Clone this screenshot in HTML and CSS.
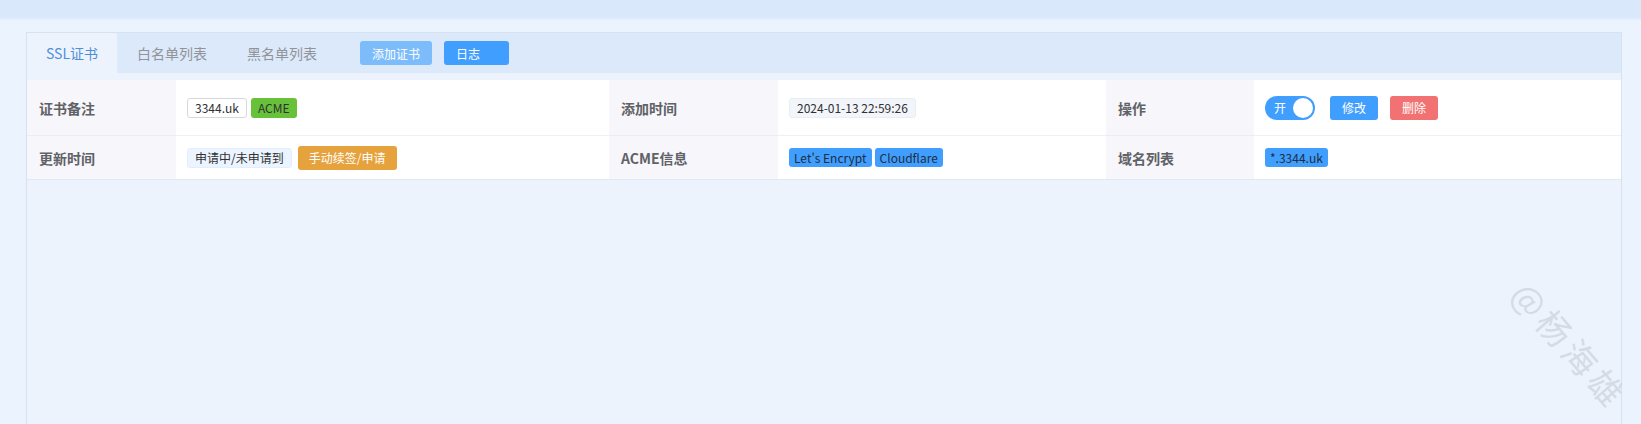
FILE: index.html
```html
<!DOCTYPE html>
<html lang="zh-CN">
<head>
    <meta charset="UTF-8">
    <meta name="viewport" content="width=device-width, initial-scale=1.0">
    <title>SSL证书</title>
    <link rel="stylesheet" href="styles.css">
</head>
<body>

<div class="topbar"></div>

<div class="page">
    <div class="card">
        <!-- タブ -->
        <div class="tabs">
            <div class="tab active">SSL证书</div>
            <div class="tab">白名单列表</div>
            <div class="tab">黑名单列表</div>
            <button class="btn btn-light add-btn">添加证书</button>
            <button class="btn btn-primary log-btn">日志</button>
        </div>

        <!-- 証明書の詳細 -->
        <div class="desc">
            <div class="label">证书备注</div>
            <div class="value">
                <span class="tag tag-plain">3344.uk</span>
                <span class="tag tag-green">ACME</span>
            </div>
            <div class="label">添加时间</div>
            <div class="value">
                <span class="tag tag-gray">2024-01-13 22:59:26</span>
            </div>
            <div class="label">操作</div>
            <div class="value ops">
                <span class="switch"><span class="switch-text">开</span><span class="knob"></span></span>
                <button class="btn btn-primary small">修改</button>
                <button class="btn btn-danger small">删除</button>
            </div>

            <div class="label last">更新时间</div>
            <div class="value last">
                <span class="tag tag-light">申请中/未申请到</span>
                <button class="btn btn-warning renew">手动续签/申请</button>
            </div>
            <div class="label last">ACME信息</div>
            <div class="value last">
                <span class="tag tag-blue">Let's Encrypt</span>
                <span class="tag tag-blue">Cloudflare</span>
            </div>
            <div class="label last">域名列表</div>
            <div class="value last">
                <span class="tag tag-blue">*.3344.uk</span>
            </div>
        </div>

        <div class="watermark">@杨海雄</div>
    </div>
</div>

</body>
</html>
```

FILE: styles.css
```css
html, body {
    height: 424px;
    overflow: hidden;
}
body {
    margin: 0;
    font-family: "Noto Sans CJK SC", "Noto Sans", sans-serif;
    background-color: #ebf3fe;
}
.topbar {
    height: 18px;
    background-color: #d9e9fb;
    border-bottom: 2px solid #e3eefc;
}
.page {
    padding: 12px 19px 0 26px;
}
.card {
    position: relative;
    height: 392px;
    border: 1px solid #d7e2f1;
    border-bottom: none;
    background-color: #edf3fd;
}
.tabs {
    display: flex;
    align-items: center;
    height: 40px;
    background-color: #dbe9fa;
}
.tab {
    height: 40px;
    line-height: 40px;
    width: 110px;
    text-align: center;
    white-space: nowrap;
    font-size: 14px;
    color: #909399;
}
.tab.active {
    width: 90px;
    background-color: #edf3fd;
    color: #4f8fd6;
}
.btn {
    height: 24px;
    padding: 0;
    border: none;
    border-radius: 3px;
    color: #fff;
    font-family: inherit;
    font-size: 12px;
    cursor: pointer;
}
.btn-light {
    background-color: #7dbcfb;
}
.btn-primary {
    background-color: #409eff;
}
.btn-danger {
    background-color: #f27172;
}
.btn-warning {
    background-color: #e6a23c;
}
.add-btn {
    width: 72px;
    margin-left: 23px;
}
.log-btn {
    width: 65px;
    margin-left: 12px;
    padding-left: 12px;
    text-align: left;
}
.desc {
    display: grid;
    grid-template-columns: 149px 433px 169px 328px 148px 1fr;
    grid-template-rows: 56px 43px;
    margin-top: 7px;
    border-bottom: 1px solid #e1e9f4;
}
.label {
    display: flex;
    align-items: center;
    padding-left: 12px;
    background-color: #f6f6fb;
    border-bottom: 1px solid #ecedf3;
    font-size: 14px;
    font-weight: bold;
    color: #606266;
}
.value {
    display: flex;
    align-items: center;
    padding-left: 11px;
    background-color: #fff;
    border-bottom: 1px solid #eef0f5;
}
.last {
    border-bottom: none;
}
.tag {
    display: inline-flex;
    align-items: center;
    height: 20px;
    padding: 0 7px;
    box-sizing: border-box;
    border-radius: 3px;
    font-size: 12px;
    color: #303133;
    white-space: nowrap;
}
.tag + .tag {
    margin-left: 4px;
}
.tag-plain {
    border: 1px solid #d5d8dc;
    background-color: #fff;
}
.tag-green {
    background-color: #67c23a;
    margin-left: 5px;
}
.tag-gray {
    background-color: #f2f5f9;
    border: 1px solid #e8edf3;
}
.tag-light {
    background-color: #ecf5ff;
    border: 1px solid #e1eefc;
}
.tag-blue {
    height: 19px;
    padding: 0 5px;
    background-color: #409eff;
    color: #1f2d3d;
}
.tag-blue + .tag-blue {
    margin-left: 3px;
}
.renew {
    width: 99px;
    margin-left: 6px;
}
.switch {
    display: inline-flex;
    align-items: center;
    justify-content: space-between;
    width: 50px;
    height: 24px;
    padding: 0 2px 0 9px;
    box-sizing: border-box;
    border-radius: 12px;
    background-color: #409eff;
}
.switch-text {
    font-size: 12px;
    color: #fff;
}
.knob {
    width: 20px;
    height: 20px;
    border-radius: 50%;
    background-color: #fff;
}
.small {
    width: 48px;
}
.ops .small {
    margin-left: 12px;
}
.ops .switch + .small {
    margin-left: 15px;
}
.watermark {
    position: absolute;
    left: 1466px;
    top: 288px;
    font-size: 34px;
    line-height: 48px;
    color: #d5dbe5;
    transform: rotate(49deg);
    letter-spacing: 5px;
    white-space: nowrap;
}
```
